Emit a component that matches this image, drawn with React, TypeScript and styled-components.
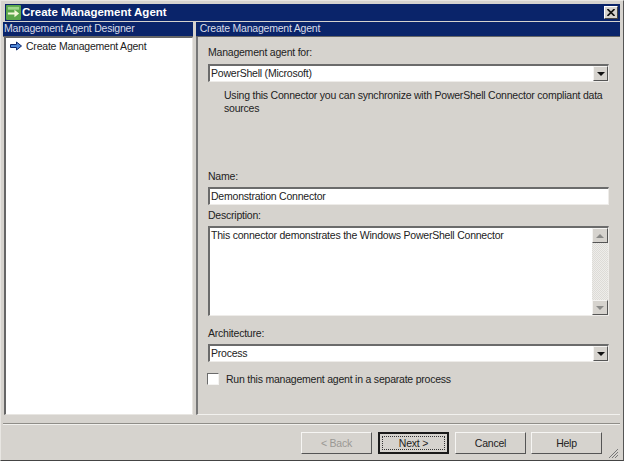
import React from 'react';
import styled, { createGlobalStyle } from 'styled-components';

const GlobalStyle = createGlobalStyle`
    html, body { margin: 0; padding: 0; background: #d4d0c8; }
    body { font-family: "Liberation Sans", Arial, sans-serif; font-size: 10.5px; letter-spacing: -0.22px; color: #222; }
`;

const Win = styled.div`
    width: 624px;
    height: 461px;
    box-sizing: border-box;
    background: #d6d3ce;
    border: 1px solid #fff;
    border-top-color: #e8e6e2;
    border-left-color: #e8e6e2;
    border-right-color: #555;
    border-bottom-color: #444;
    padding: 3px 3px 0 2px;
    display: flex;
    flex-direction: column;
`;

const TitleBar = styled.div`
    height: 17px;
    flex: none;
    background: #0a246a;
    display: flex;
    align-items: center;
    padding: 0 2px 0 1px;
    margin-left: 2px;
    color: #fff;
    font-weight: bold;
    font-size: 11.5px;
    letter-spacing: 0;
`;

const TitleText = styled.span`
    margin: -1px 0 0 1px;
    flex: 1;
`;

const CloseButton = styled.div`
    width: 14px;
    height: 13px;
    background: #d6d3ce;
    border: 1px solid;
    border-color: #fff #444 #444 #fff;
    box-sizing: border-box;
    display: flex;
    align-items: center;
    justify-content: center;
`;

const Panes = styled.div`
    display: grid;
    grid-template-columns: 190px 1fr;
    column-gap: 3px;
    margin-top: 1px;
    height: 393px;
    flex: none;
`;

const Pane = styled.div`
    display: flex;
    flex-direction: column;
    min-width: 0;
`;

const PaneHeader = styled.div`
    height: 14px;
    flex: none;
    background: #0a246a;
    color: #d8dce8;
    line-height: 12px;
    padding-left: 1px;
    white-space: nowrap;
    overflow: hidden;
    border-bottom: 1px solid #666;
`;

const TreePane = styled.div`
    flex: 1;
    background: #fff;
    margin-left: 1px;
    border: 1px solid;
    border-color: #666 #e8e6e2 #e8e6e2 #666;
    border-left-width: 2px;
    padding: 1px 0 0 4px;
`;

const TreeItem = styled.div`
    display: flex;
    align-items: center;
    gap: 4px;
    height: 14px;
`;

const FormPane = styled.div`
    flex: 1;
    border-left: 2px solid #777;
    border-bottom: 1px solid #f2f1ee;
    padding: 9px 11px 0 10px;
    display: flex;
    flex-direction: column;
`;

const Label = styled.div<{ $top?: number }>`
    height: 13px;
    line-height: 13px;
    margin-top: ${({ $top }) => $top ?? 0}px;
`;

const Field = styled.div<{ $height?: number; $top?: number }>`
    height: ${({ $height }) => $height ?? 18}px;
    margin-top: ${({ $top }) => $top ?? 3}px;
    box-sizing: border-box;
    background: #fff;
    border: 2px solid;
    border-color: #6b6b6b #eeece9 #eeece9 #6b6b6b;
    border-right-width: 1px;
    border-bottom-width: 1px;
    display: flex;
    align-items: stretch;
    flex: none;
`;

const FieldText = styled.div`
    flex: 1;
    padding: 1px 0 0 1px;
    line-height: 13px;
    white-space: nowrap;
`;

const DropButton = styled.div`
    width: 15px;
    background: #d6d3ce;
    box-sizing: border-box;
    border: 1px solid;
    border-color: #f4f3f1 #555 #555 #f4f3f1;
    display: flex;
    align-items: center;
    justify-content: center;
`;

const Arrow = styled.div<{ $up?: boolean; $dim?: boolean }>`
    width: 0;
    height: 0;
    border-left: 4px solid transparent;
    border-right: 4px solid transparent;
    ${({ $up, $dim }) => `border-${$up ? 'bottom' : 'top'}: 4px solid ${$dim ? '#8a8a88' : '#111'};`}
`;

const Hint = styled.div`
    margin: 7px 0 0 16px;
    line-height: 13px;
    height: 81px;
    width: 384px;
`;

const ScrollBar = styled.div`
    width: 16px;
    display: flex;
    flex-direction: column;
    justify-content: space-between;
    background: repeating-conic-gradient(#eeedea 0% 25%, #dddbd7 0% 50%) 0 0 / 2px 2px;
`;

const ScrollButton = styled(DropButton)`
    width: 16px;
    height: 15px;
`;

const CheckRow = styled.div`
    display: flex;
    align-items: center;
    gap: 7px;
    margin: 11px 0 0 -1px;
`;

const CheckBox = styled.div`
    width: 12px;
    height: 12px;
    box-sizing: border-box;
    background: #fff;
    border: 1px solid;
    border-color: #6b6b6b #f4f3f1 #f4f3f1 #6b6b6b;
`;

const Footer = styled.div`
    flex: 1;
    position: relative;
    margin-top: 8px;
    border-top: 1px solid #8f8d88;
    box-shadow: inset 0 1px 0 #f2f1ee;
    display: flex;
    justify-content: flex-end;
    align-items: flex-start;
    gap: 6px;
    padding: 8px 18px 0 0;
`;

const Button = styled.div<{ $primary?: boolean; $disabled?: boolean }>`
    width: 71px;
    height: 22px;
    box-sizing: border-box;
    background: #d6d3ce;
    border: 1px solid;
    border-color: #f6f5f3 #555 #555 #f6f5f3;
    display: flex;
    align-items: center;
    justify-content: center;
    color: ${({ $disabled }) => ($disabled ? '#9a9894' : '#222')};
    ${({ $primary }) => $primary && `
        border: 2px solid #1a1a1a;
        outline: 1px dotted #333;
        outline-offset: -5px;
    `}
    &:last-of-type {
        margin-left: -1px;
    }
`;

const Grip = styled.svg`
    position: absolute;
    right: 1px;
    bottom: 1px;
`;

const ArrowIcon = () => (
    <svg width="12" height="10" viewBox="0 0 12 10">
        <path d="M0.5 3.5H6.5V1L11.5 5L6.5 9V6.5H0.5Z" fill="#4d86d6" stroke="#0a246a" strokeWidth="1" />
    </svg>
);

const AppIcon = () => (
    <svg width="15" height="15" viewBox="0 0 16 16">
        <rect width="16" height="16" rx="1" fill="#5aa64a" />
        <rect x="2" y="2" width="12" height="3" fill="#9fd78c" />
        <path d="M2 8H9V5L14 9L9 13V10H2Z" fill="#f2f7d8" />
    </svg>
);

const App: React.FC = () => (
    <>
        <GlobalStyle />
        <Win>
            <TitleBar>
                <AppIcon />
                <TitleText>Create Management Agent</TitleText>
                <CloseButton>
                    <svg width="8" height="7" viewBox="0 0 8 7">
                        <path d="M0.5 0L7.5 7M7.5 0L0.5 7" stroke="#111" strokeWidth="1.6" />
                    </svg>
                </CloseButton>
            </TitleBar>
            <Panes>
                <Pane>
                    <PaneHeader>Management Agent Designer</PaneHeader>
                    <TreePane>
                        <TreeItem>
                            <ArrowIcon />
                            Create Management Agent
                        </TreeItem>
                    </TreePane>
                </Pane>
                <Pane>
                    <PaneHeader>&nbsp;Create Management Agent</PaneHeader>
                    <FormPane>
                        <Label>Management agent for:</Label>
                        <Field $top={5}>
                            <FieldText>PowerShell (Microsoft)</FieldText>
                            <DropButton><Arrow /></DropButton>
                        </Field>
                        <Hint>Using this Connector you can synchronize with PowerShell Connector compliant data sources</Hint>
                        <Label>Name:</Label>
                        <Field $top={4}>
                            <FieldText>Demonstration Connector</FieldText>
                        </Field>
                        <Label $top={4}>Description:</Label>
                        <Field $height={90} $top={4}>
                            <FieldText>This connector demonstrates the Windows PowerShell Connector</FieldText>
                            <ScrollBar>
                                <ScrollButton><Arrow $up $dim /></ScrollButton>
                                <ScrollButton><Arrow $dim /></ScrollButton>
                            </ScrollBar>
                        </Field>
                        <Label $top={11}>Architecture:</Label>
                        <Field $top={4}>
                            <FieldText>Process</FieldText>
                            <DropButton><Arrow /></DropButton>
                        </Field>
                        <CheckRow>
                            <CheckBox />
                            Run this management agent in a separate process
                        </CheckRow>
                    </FormPane>
                </Pane>
            </Panes>
            <Footer>
                <Button $disabled>&lt; Back</Button>
                <Button $primary>Next &gt;</Button>
                <Button>Cancel</Button>
                <Button>Help</Button>
                <Grip width="12" height="12" viewBox="0 0 12 12">
                    <path d="M11 2L2 11M11 5L5 11M11 8L8 11" stroke="#777" strokeWidth="1" />
                </Grip>
            </Footer>
        </Win>
    </>
);

export default App;
